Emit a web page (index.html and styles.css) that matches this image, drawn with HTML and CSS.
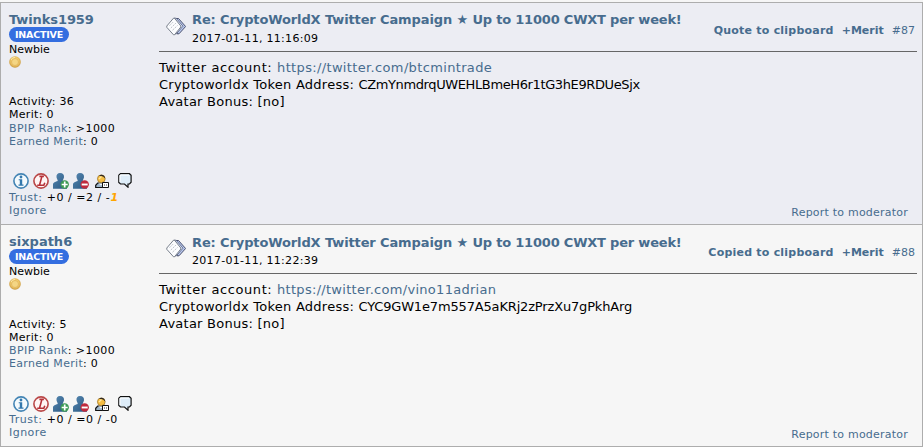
FILE: index.html
```
<!DOCTYPE html>
<html lang="en">
<head>
<meta charset="utf-8">
<title>CryptoWorldX Twitter Campaign</title>
<link rel="stylesheet" href="styles.css">
</head>
<body>
<svg class="defs" width="0" height="0">
  <defs>
    <radialGradient id="gold" cx=".5" cy=".45" r=".55"><stop offset="0" stop-color="#ffe9a0"/><stop offset=".6" stop-color="#f3cc6a"/><stop offset="1" stop-color="#c6963f"/></radialGradient>
    <linearGradient id="person" x1="0" y1="0" x2="1" y2="1"><stop offset="0" stop-color="#5688b2"/><stop offset="1" stop-color="#28557e"/></linearGradient>
    <symbol id="coin" viewBox="0 0 12 12"><circle cx="6" cy="6" r="5.8" fill="url(#gold)"/><circle cx="6" cy="6" r="3.5" fill="#f4d684" stroke="#dfb25a" stroke-width=".8"/><path d="M2 4Q3 1.5 6 1.3" fill="none" stroke="#fff0b9" stroke-width=".8"/></symbol>
    <symbol id="info" viewBox="0 0 16 16"><circle cx="8" cy="8" r="7.1" fill="#f4fafd" stroke="#4384b4" stroke-width="1.6"/><circle cx="8" cy="4" r="1.4" fill="#3378ad"/><path d="M5.7 6.2h3.5v5.4h1.3v1.2h-5v-1.2h1.3V7.3H5.7z" fill="#3378ad"/></symbol>
    <symbol id="ledger" viewBox="0 0 16 16"><circle cx="8" cy="8" r="7.1" fill="#fff5f4" stroke="#b94747" stroke-width="1.6"/><path d="M6.4 3.4h4.5M8.9 3.4L6.5 12.2M4.2 12.3h6.6l1-2.5" fill="none" stroke="#b53038" stroke-width="1.6"/></symbol>
    <symbol id="user" viewBox="0 0 16 16"><path d="M7 0C10 0 11.3 1.8 11 4.2 10.8 5.8 9.7 6.7 9.8 8c2.5.8 4.2 1.3 4.2 4v3.8H0V11.5c0-2.2 2.5-2.6 4.7-3.5.2-1.3-1-2.2-1.2-3.8C3.2 1.8 4.5 0 7 0z" fill="url(#person)"/></symbol>
    <symbol id="add" viewBox="0 0 16 16"><use href="#user"/><circle cx="11.7" cy="11.5" r="4.2" fill="#3c9a54"/><path d="M11.7 8.5v6M8.7 11.5h6" stroke="#fff" stroke-width="1.7"/></symbol>
    <symbol id="remove" viewBox="0 0 16 16"><use href="#user"/><circle cx="11.7" cy="11.5" r="4.2" fill="#c02a3d"/><path d="M8.7 11.5h6" stroke="#fff" stroke-width="1.9"/></symbol>
    <symbol id="profile" viewBox="0 0 15 15"><path d="M.7 13.5v-2.2L2.7 9h7l2 2v2.5z" fill="#9eb6ca" stroke="#111" stroke-width="1.2"/><path d="M3.5 9.5l2.5 2 3-2" fill="#eef5fa"/><circle cx="6.3" cy="4.8" r="3.9" fill="#f5bd43" stroke="#8b651e" stroke-width=".6"/><path d="M4 1.8C6-.3 9.8.4 10.2 4.6L8 2.4z" fill="#302a24"/><path d="M4 5l2.5-2.5" stroke="#ffe9a2" stroke-width="1.3"/><path d="M7.5 8.5h6v5h-6z" fill="#fff" stroke="#111"/><path d="M9 11h1m1 0h1" stroke="#333"/></symbol>
    <symbol id="bubble" viewBox="0 0 14 15"><path d="M2.5.7h9l1.6 1.5v7L11.5 11H10v3.2L6.5 11h-4L.8 9.4V2.2z" fill="#deedf9" stroke="#111" stroke-width="1.2"/><path d="M2 9V2h9" fill="none" stroke="#fff"/></symbol>
    <symbol id="pages" viewBox="0 0 20 20"><path d="M10 1.5h2.5l7.1 8-6.6 7.3h-2z" fill="#b9c8ee" stroke="#3a4260" stroke-width=".9"/><path d="M8 1.2h2.2l6.8 8-6.6 7.6-2.4.2z" fill="#d5dff7" stroke="#59617c" stroke-width=".8"/><path d="M7.5 1.2h1L14.8 9v1L8.5 17.8h-1L.8 10.3V9z" fill="#fcfdff" stroke="#69727e" stroke-width=".9"/><path d="M3.5 8.7L7 5.2M4.8 11L10 6M6.5 13.2l5-4.7" stroke="#a8aeb8" stroke-width=".8" stroke-dasharray="2 1"/></symbol>
  </defs>
</svg>
<main class="thread">
  <article class="post tinted">
    <aside class="author">
      <a class="name">Twinks1959</a>
      <span class="badge">INACTIVE</span>
      <span class="rank">Newbie</span>
      <svg class="coin"><use href="#coin"/></svg>
      <div class="stats"><div>Activity: 36</div><div>Merit: 0</div><div class="bpip"><a>BPIP Rank</a>: &gt;1000</div><div><a>Earned Merit</a>: 0</div></div>
      <div class="actions"><svg><use href="#info"/></svg><svg><use href="#ledger"/></svg><svg><use href="#add"/></svg><svg><use href="#remove"/></svg><svg class="profile"><use href="#profile"/></svg><svg class="bubble"><use href="#bubble"/></svg></div>
      <div class="trust"><a>Trust:</a> +0 / =2 / -<b class="negative">1</b></div>
      <a class="ignore">Ignore</a>
    </aside>
    <section class="content">
      <header class="heading">
        <svg class="pages"><use href="#pages"/></svg>
        <div class="subject"><a class="title">Re: CryptoWorldX Twitter Campaign ★ <span class="offer">Up to 11000 CWXT per week!</span></a><time>2017-01-11, 11:16:09</time></div>
        <nav class="tools"><a class="clip">Quote to clipboard</a><a class="merit">+Merit</a><a class="number">#87</a></nav>
      </header>
      <div class="body"><div class="account">Twitter account: <a>https://twitter.com/btcmintrade</a></div><div>Cryptoworldx Token Address: <span class="token">CZmYnmdrqUWEHLBmeH6r1tG3hE9RDUeSjx</span></div><div>Avatar Bonus: [no]</div></div>
      <a class="report">Report to moderator</a>
    </section>
  </article>
  <article class="post plain">
    <aside class="author">
      <a class="name">sixpath6</a>
      <span class="badge">INACTIVE</span>
      <span class="rank">Newbie</span>
      <svg class="coin"><use href="#coin"/></svg>
      <div class="stats"><div>Activity: 5</div><div>Merit: 0</div><div class="bpip"><a>BPIP Rank</a>: &gt;1000</div><div><a>Earned Merit</a>: 0</div></div>
      <div class="actions"><svg><use href="#info"/></svg><svg><use href="#ledger"/></svg><svg><use href="#add"/></svg><svg><use href="#remove"/></svg><svg class="profile"><use href="#profile"/></svg><svg class="bubble"><use href="#bubble"/></svg></div>
      <div class="trust"><a>Trust:</a> +0 / =0 / -0</div>
      <a class="ignore">Ignore</a>
    </aside>
    <section class="content">
      <header class="heading">
        <svg class="pages"><use href="#pages"/></svg>
        <div class="subject"><a class="title">Re: CryptoWorldX Twitter Campaign ★ <span class="offer">Up to 11000 CWXT per week!</span></a><time>2017-01-11, 11:22:39</time></div>
        <nav class="tools"><a class="clip">Copied to clipboard</a><a class="merit">+Merit</a><a class="number">#88</a></nav>
      </header>
      <div class="body"><div class="account">Twitter account: <a>https://twitter.com/vino11adrian</a></div><div>Cryptoworldx Token Address: <span class="token">CYC9GW1e7m557A5aKRj2zPrzXu7gPkhArg</span></div><div>Avatar Bonus: [no]</div></div>
      <a class="report">Report to moderator</a>
    </section>
  </article>
</main>
</body>
</html>
```
FILE: styles.css
```
* { box-sizing: border-box; }
body { margin: 0; background: #f6f6f6; color: #000; font: 11px/13px Verdana, "DejaVu Sans", sans-serif; overflow: hidden; }
.defs { display: block; height: 0; }
a { color: #476c8e; text-decoration: none; }
.thread { margin-top: 2px; width: 923px; height: 445px; border: 1px solid #adadad; }
.post { display: flex; height: 221px; white-space: nowrap; }
.tinted { background: #ecedf3; }
.plain { height: 222px; border-top: 1px solid #adadad; background: #f6f6f6; }
.author { width: 158px; padding: 9px 0 0 8px; display: flex; flex-direction: column; align-items: flex-start; }
.name { font-size: 13px; font-weight: bold; line-height: 16px; letter-spacing: -.1px; }
.plain .name { letter-spacing: 0; }
.badge { width: 60px; height: 15px; margin-top: -1px; text-align: center; border-radius: 8px; background: #346ee0; color: #fff; font-size: 9.5px; font-weight: bold; line-height: 15px; letter-spacing: -.2px; }
.rank { margin-top: 1px; }
.coin { width: 12px; height: 12px; }
.stats { margin-top: 27px; letter-spacing: .3px; }
.plain .stats { margin-top: 28px; }
.bpip { margin-top: 1px; letter-spacing: .42px; }
.plain .bpip { margin-top: 0; }
.actions { display: flex; gap: 4px; width: 130px; height: 17px; margin: 25px 0 0 4px; }
.actions svg { width: 16px; height: 16px; flex: none; }
.actions .profile { width: 15px; height: 15px; margin: 1px 0 0 2px; }
.actions .bubble { width: 14px; height: 15px; margin-left: 4px; }
.plain .actions { margin-top: 26px; }
.trust { margin-top: 1px; letter-spacing: .54px; }
.plain .trust { margin-top: 0; }
.ignore { letter-spacing: .45px; }
.negative { color: orange; font-style: italic; }
.content { flex: 1; padding: 9px 5px 0 0; display: flex; flex-direction: column; }
.heading { display: flex; height: 40px; border-bottom: 1px solid #666; }
.pages { width: 20px; height: 20px; margin: 5px 6px 0 7px; }
.subject { display: flex; flex-direction: column; flex: 1; }
.title { font-size: 13px; font-weight: bold; line-height: 16px; letter-spacing: -.12px; }
.offer { letter-spacing: -.2px; }
.plain .title { padding-top: 1px; line-height: 15px; }
time { margin-top: 4px; letter-spacing: .3px; }
.tools { display: flex; align-items: baseline; margin: 12px 2px 0 0; }
.clip, .merit { font-weight: bold; margin-right: 8px; }
.clip { letter-spacing: .22px; }
.body { margin-top: 7px; font-size: 13px; line-height: 17px; letter-spacing: .25px; }
.account { letter-spacing: .59px; }
.account a { letter-spacing: .35px; }
.token { letter-spacing: -.38px; }
.plain .account a { letter-spacing: .29px; }
.plain .token { letter-spacing: -.16px; }
.report { align-self: flex-end; margin: auto 9px 5px 0; letter-spacing: .22px; }
```
